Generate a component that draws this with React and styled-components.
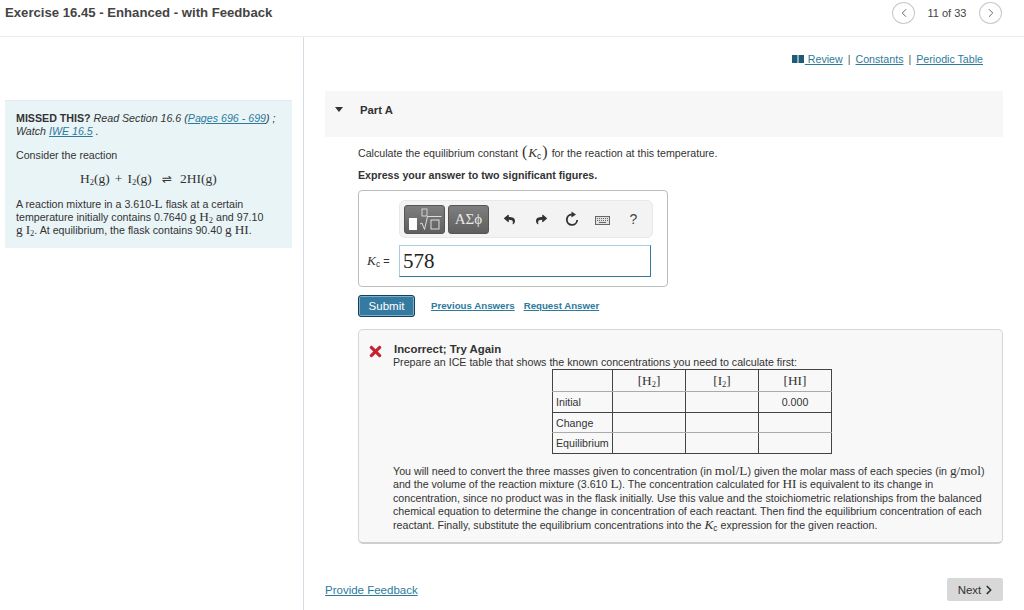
import styled, { createGlobalStyle } from "styled-components";
import { ChevronLeft, ChevronRight } from "lucide-react";
import { FaReply, FaShare, FaTimes } from "react-icons/fa";

const GlobalStyle = createGlobalStyle`
  html, body {
    margin: 0;
    padding: 0;
    background: #fff;
    color: #333;
    font-family: "Liberation Sans", Arial, sans-serif;
    font-size: 10.67px;
    overflow: hidden;
  }
  * { box-sizing: border-box; }
`;

const Page = styled.div`
  width: 1024px;
  height: 610px;
  display: flex;
  flex-direction: column;
`;

const Header = styled.header`
  height: 37px;
  flex: none;
  display: flex;
  align-items: flex-start;
  justify-content: space-between;
  padding: 2px 22px 0 5px;
  border-bottom: 1px solid #ececec;
`;

const Title = styled.h1`
  margin: 3px 0 0;
  line-height: 15px;
  font-size: 13.15px;
  font-weight: bold;
  color: #444;
`;

const Pager = styled.div`
  display: flex;
  align-items: center;
  font-size: 11px;
  color: #444;
`;

const PagerCount = styled.span`
  width: 64px;
  text-align: center;
`;

const RoundButton = styled.span`
  width: 23px;
  height: 22px;
  border: 1px solid #c9c9c9;
  border-radius: 50%;
  display: flex;
  align-items: center;
  justify-content: center;
  color: #555;
`;

const Columns = styled.div`
  flex: 1;
  display: grid;
  grid-template-columns: 304px 1fr;
  min-height: 0;
`;

const LeftColumn = styled.aside`
  border-right: 1px solid #d6dce3;
  padding: 63px 11px 0 5px;
`;

const InfoPanel = styled.div`
  height: 148px;
  background: #e9f4f7;
  border-top: 1px solid #e3e9ec;
  padding: 11px 10px 0 11px;
  line-height: 13px;
`;

const InfoBlock = styled.p`
  margin: ${({ $top }) => $top || 0}px 0 0;
`;

const Strong = styled.strong`
  font-weight: bold;
`;

const Em = styled.em`
  font-style: italic;
`;

const Link = styled.a`
  color: #2d7a9c;
  text-decoration: underline;
`;

const Equation = styled.div`
  margin: 8px 0 0 64px;
  height: 18px;
  line-height: 18px;
  font-size: 13.5px;
  font-family: "Liberation Serif", serif;
  white-space: pre;
`;

const EquationPlus = styled.span`
  margin: 0 5px;
`;

const Math = styled.span`
  font-family: "Liberation Serif", serif;
  font-size: 13.3px;
  line-height: 0;
`;

const MathVar = styled(Math)`
  font-style: italic;
`;

const BigParen = styled(Math)`
  font-size: 16px;
  padding: 0 1px;
`;

const Sub = styled.sub`
  font-size: 8.5px;
  line-height: 0;
  vertical-align: -2px;
`;

const Harpoons = styled.span`
  font-family: "DejaVu Sans", sans-serif;
  font-size: 12px;
  margin: 0 8px 0 10px;
`;

const RightColumn = styled.main`
  padding: 15px 21px 0 21px;
  display: flex;
  flex-direction: column;
`;

const TopLinks = styled.nav`
  height: 14px;
  line-height: 14px;
  display: flex;
  justify-content: flex-end;
  align-items: center;
  padding-right: 20px;
`;

const BookIcon = styled.svg`
  width: 12px;
  height: 8px;
  margin-right: 1px;
`;

const Divider = styled.span`
  margin: 0 5px;
  color: #555;
`;

const PartBar = styled.div`
  margin-top: 25px;
  height: 46px;
  background: #f7f7f7;
  display: flex;
  align-items: flex-start;
  padding: 13px 0 0 10px;
  font-size: 11.3px;
  font-weight: bold;
  color: #333;
`;

const Caret = styled.span`
  width: 0;
  height: 0;
  margin: 3px 17px 0 0;
  border-left: 4.5px solid transparent;
  border-right: 4.5px solid transparent;
  border-top: 5px solid #333;
`;

const PartBody = styled.section`
  padding-left: 33px;
`;

const Question = styled.p`
  margin: 0;
  padding-top: 9px;
  height: 31px;
  line-height: 15px;
`;

const Instruction = styled.p`
  margin: 0;
  height: 22px;
  padding-top: 1px;
  line-height: 13px;
  font-weight: bold;
`;

const AnswerBox = styled.div`
  width: 310px;
  height: 97px;
  border: 1px solid #bdbdbd;
  border-radius: 4px;
  padding: 9px 14px 0 0;
  display: flex;
  flex-direction: column;
  align-items: flex-end;
`;

const Toolbar = styled.div`
  width: 254px;
  height: 38px;
  background: #f3f3f3;
  border: 1px solid #e8e8e8;
  border-radius: 6px;
  display: flex;
  align-items: center;
  padding-left: 4px;
`;

const ToolButton = styled.span`
  width: 41px;
  height: 29px;
  margin-right: 3px;
  border-radius: 3px;
  background: linear-gradient(#7e7e7e, #5f5f5f);
  border: 1px solid #555;
  color: #e8e8e8;
  display: flex;
  align-items: center;
  justify-content: center;
  font-family: "Liberation Serif", serif;
  font-size: 15px;
`;

const ToolIcon = styled.span`
  width: ${({ $w }) => $w}px;
  display: flex;
  justify-content: center;
  color: #333;
  font-size: 14px;
`;

const KeyboardSlot = styled(ToolIcon)`
  margin-top: 3px;
`;

const HelpSlot = styled(ToolIcon)`
  color: #444;
`;

const AnswerRow = styled.div`
  width: 294px;
  margin: 7px 2px 0 0;
  display: flex;
  align-items: center;
  justify-content: space-between;
`;

const EqualsLabel = styled.span`
  margin-left: 10px;
  font-size: 11px;
  color: #333;
`;

const AnswerInput = styled.div`
  width: 252px;
  height: 32px;
  border: 1px solid #2f7a9d;
  border-top-color: #a9cddd;
  border-left-color: #a9cddd;
  padding-left: 3px;
  font-family: "Liberation Serif", serif;
  font-size: 21px;
  line-height: 30px;
  color: #222;
`;

const Actions = styled.div`
  margin-top: 8px;
  height: 22px;
  display: flex;
  align-items: flex-start;
`;

const SubmitButton = styled.span`
  width: 57px;
  height: 22px;
  background: #357aa0;
  border: 1px solid #123f63;
  box-shadow: inset 0 0 0 1px #7fb0c8;
  border-radius: 3px;
  color: #fff;
  font-size: 11.5px;
  display: flex;
  align-items: center;
  justify-content: center;
  margin-right: 16px;
`;

const ActionLink = styled(Link)`
  font-weight: bold;
  font-size: 9.7px;
  line-height: 21px;
  margin-right: 9px;
`;

const Feedback = styled.div`
  margin-top: 12px;
  height: 215px;
  background: #f8f8f8;
  border: 1px solid #d6d6d6;
  border-bottom: 2px solid #cfcfcf;
  border-radius: 5px;
  padding: 13px 5px 0 11px;
  display: flex;
  align-items: flex-start;
`;

const ErrorIcon = styled.span`
  width: 26px;
  flex: none;
  margin-left: -3px;
  color: #c8202f;
  font-size: 17px;
  line-height: 14px;
`;

const FeedbackBody = styled.div`
  flex: 1;
`;

const FeedbackTitle = styled.div`
  padding-left: 1px;
  font-size: 11.4px;
  font-weight: bold;
  line-height: 13px;
`;

const FeedbackIntro = styled.div`
  line-height: 13px;
`;

const IceTable = styled.table`
  margin: 0 0 0 159px;
  border-collapse: collapse;
  width: 280px;
  table-layout: fixed;
`;

const Cell = styled.td`
  height: ${({ $h }) => $h}px;
  padding: 0 3px;
  border-top: 1px solid ${({ $dark }) => ($dark ? "#444" : "#aaa")};
  border-bottom: 1px solid ${({ $darkBottom }) => ($darkBottom ? "#444" : "#aaa")};
  border-left: 1px solid #444;
  border-right: 1px solid #444;
  text-align: ${({ $left }) => ($left ? "left" : "center")};
  width: ${({ $w }) => ($w ? `${$w}px` : "auto")};
`;

const Explanation = styled.p`
  margin: 11px 0 0;
  line-height: 13.4px;
  white-space: nowrap;
`;

const Footer = styled.div`
  margin-top: 34px;
  display: flex;
  justify-content: space-between;
  align-items: center;
`;

const FeedbackLink = styled(Link)`
  font-size: 11.5px;
`;

const NextButton = styled.span`
  width: 56px;
  height: 23px;
  padding-left: 4px;
  background: #d8d8d8;
  border-radius: 2px;
  color: #333;
  font-size: 11.5px;
  display: flex;
  align-items: center;
  justify-content: center;
  gap: 1px;
`;

const SqrtIcon = () => (
  <svg width="37" height="25" viewBox="0 0 37 25" fill="none">
    <rect x="3" y="11" width="8" height="12" fill="#fff" />
    <rect x="16" y="2" width="5" height="7" stroke="#e8e8e8" strokeWidth="0.8" />
    <path d="M14 17l2 -1 2.5 6.5 3 -13h14" stroke="#e8e8e8" strokeWidth="0.9" />
    <rect x="25" y="13" width="8" height="9" stroke="#e8e8e8" strokeWidth="0.9" />
  </svg>
);

const RedoIcon = () => (
  <svg width="14" height="16" viewBox="0 0 14 16" fill="none">
    <path d="M7 3.5a5.2 5.2 0 1 0 5.2 5.5" stroke="#333" strokeWidth="1.8" />
    <path d="M6.5 0.5l4.5 3 -4.5 3z" fill="#333" />
  </svg>
);

const KeyboardIcon = () => (
  <svg width="15" height="9" viewBox="0 0 15 9" fill="none">
    <rect x="0.5" y="0.5" width="14" height="8" fill="#e2e2e2" stroke="#666" />
    <path d="M2 2.5h11M2 4.5h11" stroke="#666" strokeDasharray="1 1" />
    <path d="M4 6.5h7" stroke="#666" />
  </svg>
);

const Kc = () => (
  <>
    <MathVar>K</MathVar>
    <Sub>c</Sub>
  </>
);

export default function App() {
  return (
    <Page>
      <GlobalStyle />
      <Header>
        <Title>Exercise 16.45 - Enhanced - with Feedback</Title>
        <Pager>
          <RoundButton>
            <ChevronLeft size={14} strokeWidth={1.5} />
          </RoundButton>
          <PagerCount>11 of 33</PagerCount>
          <RoundButton>
            <ChevronRight size={14} strokeWidth={1.5} />
          </RoundButton>
        </Pager>
      </Header>
      <Columns>
        <LeftColumn>
          <InfoPanel>
            <InfoBlock>
              <Strong>MISSED THIS?</Strong>{" "}
              <Em>
                Read Section 16.6 (<Link>Pages 696 - 699</Link>) ;
                <br />
                Watch <Link>IWE 16.5</Link> .
              </Em>
            </InfoBlock>
            <InfoBlock $top={11}>Consider the reaction</InfoBlock>
            <Equation>
              H<Sub>2</Sub>(g)<EquationPlus>+</EquationPlus>I<Sub>2</Sub>(g)
              <Harpoons>⇌</Harpoons>
              2HI(g)
            </Equation>
            <InfoBlock $top={10}>
              A reaction mixture in a 3.610-<Math>L</Math> flask at a certain
              <br />
              temperature initially contains 0.7640 <Math>g</Math>{" "}
              <Math>
                H<Sub>2</Sub>
              </Math>{" "}
              and 97.10
              <br />
              <Math>g</Math>{" "}
              <Math>
                I<Sub>2</Sub>
              </Math>
              . At equilibrium, the flask contains 90.40 <Math>g</Math>{" "}
              <Math>HI</Math>.
            </InfoBlock>
          </InfoPanel>
        </LeftColumn>
        <RightColumn>
          <TopLinks>
            <BookIcon viewBox="0 0 12 8">
              <path d="M0 0h5.5v8H0zM6.5 0H12v8H6.5z" fill="#1f5a78" />
            </BookIcon>
            <Link>&nbsp;Review</Link>
            <Divider>|</Divider>
            <Link>Constants</Link>
            <Divider>|</Divider>
            <Link>Periodic Table</Link>
          </TopLinks>
          <PartBar>
            <Caret />
            Part A
          </PartBar>
          <PartBody>
            <Question>
              Calculate the equilibrium constant <BigParen>(</BigParen>
              <Kc />
              <BigParen>)</BigParen> for the reaction at this temperature.
            </Question>
            <Instruction>Express your answer to two significant figures.</Instruction>
            <AnswerBox>
              <Toolbar>
                <ToolButton>
                  <SqrtIcon />
                </ToolButton>
                <ToolButton>ΑΣϕ</ToolButton>
                <ToolIcon $w={34}>
                  <FaReply size={11} />
                </ToolIcon>
                <ToolIcon $w={30}>
                  <FaShare size={11} />
                </ToolIcon>
                <ToolIcon $w={32}>
                  <RedoIcon />
                </ToolIcon>
                <KeyboardSlot $w={29}>
                  <KeyboardIcon />
                </KeyboardSlot>
                <HelpSlot $w={33}>?</HelpSlot>
              </Toolbar>
              <AnswerRow>
                <EqualsLabel>
                  <Kc /> =
                </EqualsLabel>
                <AnswerInput>578</AnswerInput>
              </AnswerRow>
            </AnswerBox>
            <Actions>
              <SubmitButton>Submit</SubmitButton>
              <ActionLink>Previous Answers</ActionLink>
              <ActionLink>Request Answer</ActionLink>
            </Actions>
            <Feedback>
              <ErrorIcon>
                <FaTimes />
              </ErrorIcon>
              <FeedbackBody>
                <FeedbackTitle>Incorrect; Try Again</FeedbackTitle>
                <FeedbackIntro>
                  Prepare an ICE table that shows the known concentrations you need to calculate first:
                </FeedbackIntro>
                <IceTable>
                  <tbody>
                    <tr>
                      <Cell $h={22} $dark $w={60} />
                      <Cell $dark>
                        <Math>
                          [H<Sub>2</Sub>]
                        </Math>
                      </Cell>
                      <Cell $dark>
                        <Math>
                          [I<Sub>2</Sub>]
                        </Math>
                      </Cell>
                      <Cell $dark>
                        <Math>[HI]</Math>
                      </Cell>
                    </tr>
                    <tr>
                      <Cell $h={21} $left $darkBottom>Initial</Cell>
                      <Cell $darkBottom />
                      <Cell $darkBottom />
                      <Cell $darkBottom>0.000</Cell>
                    </tr>
                    <tr>
                      <Cell $h={20} $left $dark>Change</Cell>
                      <Cell $dark />
                      <Cell $dark />
                      <Cell $dark />
                    </tr>
                    <tr>
                      <Cell $h={21} $left $darkBottom>Equilibrium</Cell>
                      <Cell $darkBottom />
                      <Cell $darkBottom />
                      <Cell $darkBottom />
                    </tr>
                  </tbody>
                </IceTable>
                <Explanation>
                  You will need to convert the three masses given to concentration (in <Math>mol/L</Math>) given the molar mass of each species (in <Math>g/mol</Math>)
                  <br />
                  and the volume of the reaction mixture (3.610 <Math>L</Math>). The concentration calculated for <Math>HI</Math> is equivalent to its change in
                  <br />
                  concentration, since no product was in the flask initially. Use this value and the stoichiometric relationships from the balanced
                  <br />
                  chemical equation to determine the change in concentration of each reactant. Then find the equilibrium concentration of each
                  <br />
                  reactant. Finally, substitute the equilibrium concentrations into the <Kc /> expression for the given reaction.
                </Explanation>
              </FeedbackBody>
            </Feedback>
          </PartBody>
          <Footer>
            <FeedbackLink>Provide Feedback</FeedbackLink>
            <NextButton>
              Next
              <ChevronRight size={14} strokeWidth={3} />
            </NextButton>
          </Footer>
        </RightColumn>
      </Columns>
    </Page>
  );
}
